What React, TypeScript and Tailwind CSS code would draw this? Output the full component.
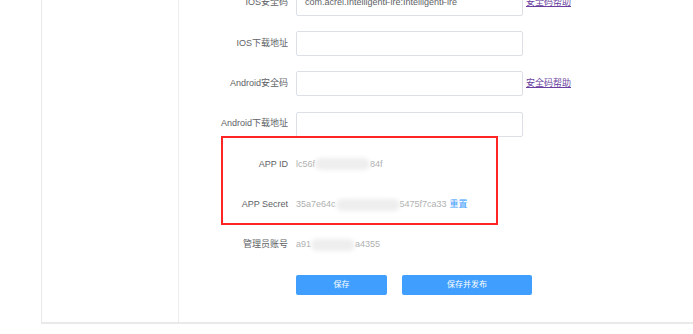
const labelCls =
  "w-[117px] shrink-0 pr-[8px] text-right text-[9px] text-[#606266]";

const FormRow = ({
  label,
  value,
  help,
}: {
  label: string;
  value?: string;
  help?: boolean;
}) => {
  return (
    <div className="flex h-[40.3px] items-center">
      <div className={labelCls}>{label}</div>
      <div className="flex h-[25px] w-[227px] items-center rounded-[2px] border border-[#dcdfe6] bg-white px-[8px] text-[9px] text-[#606266]">
        {value}
      </div>
      {help && (
        <a
          href="#"
          className="ml-[3px] text-[9px] text-[#6b3fa0] underline underline-offset-1"
        >
          安全码帮助
        </a>
      )}
    </div>
  );
};

// smudge that hides part of a key
const Blur = ({ w }: { w: string }) => (
  <span className={`inline-block h-[12px] ${w} rounded-full bg-[#eeeeee] blur-[2px] align-middle`} />
);

const InfoRow = ({ label, children }: { label: string; children: React.ReactNode }) => (
  <div className="flex h-[40.3px] items-center">
    <div className={labelCls}>{label}</div>
    <div className="flex items-center text-[9px] text-[#b0b0b0]">{children}</div>
  </div>
);

const App = () => {
  return (
    <div
      className="h-[334px] w-[693px] overflow-hidden bg-white"
      style={{ fontFamily: '"Liberation Sans", "Noto Sans CJK SC", sans-serif' }}
    >
      <div className="ml-[41px] flex h-[324px] border-b-2 border-l border-[#e9e9e9]">
        <div className="w-[137px] shrink-0 border-r border-[#ededed]" />
        <div className="relative flex-1">
          <div className="mt-[-17px] flex flex-col">
            <FormRow label="IOS安全码" value="com.acrel.IntelligentFire:IntelligentFire" help />
            <FormRow label="IOS下载地址" />
            <FormRow label="Android安全码" help />
            <FormRow label="Android下载地址" />
            <InfoRow label="APP ID">
              <span>lc56f</span>
              <Blur w="w-[55px]" />
              <span>84f</span>
            </InfoRow>
            <InfoRow label="APP Secret">
              <span>35a7e64c</span>
              <Blur w="w-[64px]" />
              <span>5475f7ca33</span>
              <a href="#" className="ml-[3px] text-[#409eff]">
                重置
              </a>
            </InfoRow>
            <InfoRow label="管理员账号">
              <span>a91</span>
              <Blur w="w-[44px]" />
              <span>a4355</span>
            </InfoRow>
            <div className="flex h-[40.3px] items-center pl-[117px]">
              <button className="h-[20px] w-[91px] rounded-[2px] bg-[#409eff] text-[8px] text-white">
                保存
              </button>
              <button className="ml-[15px] h-[20px] w-[130px] rounded-[2px] bg-[#409eff] text-[8px] text-white">
                保存并发布
              </button>
            </div>
          </div>
          <div className="absolute left-[42px] top-[136px] h-[89px] w-[277px] border-2 border-[#ff2525]" />
        </div>
      </div>
    </div>
  );
};

export default App;
